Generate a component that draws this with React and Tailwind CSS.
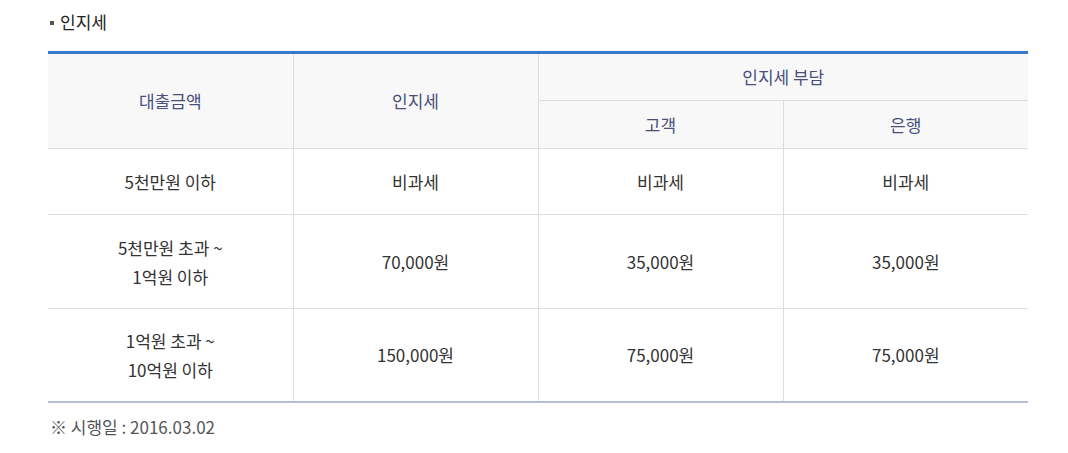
const rows = [
  { amount: ["5천만원 이하"], tax: "비과세", customer: "비과세", bank: "비과세", h: "h-[66px]" },
  { amount: ["5천만원 초과 ~", "1억원 이하"], tax: "70,000원", customer: "35,000원", bank: "35,000원", h: "h-[94px]" },
  { amount: ["1억원 초과 ~", "10억원 이하"], tax: "150,000원", customer: "75,000원", bank: "75,000원", h: "h-[93px]" },
];

const App = () => {
  return (
    <div className="bg-white w-[1068px] h-[453px] px-[48px] pt-[9px] text-[17px] text-[#333] font-['Malgun_Gothic','Noto_Sans_CJK_KR',sans-serif]">
      <h3 className="flex items-center gap-[6px] text-[17px] font-normal text-[#222] leading-[26px] pl-[2px]">
        <span className="w-[4px] h-[4px] bg-[#555] inline-block mt-[2px]"></span>
        인지세
      </h3>

      <table className="mt-[16px] w-[980px] border-collapse table-fixed text-center border-t-[3px] border-t-[#3a78cc] border-b-2 border-b-[#b8bdd6]">
        <colgroup>
          <col className="w-[245px]" />
          <col className="w-[245px]" />
          <col className="w-[245px]" />
          <col className="w-[245px]" />
        </colgroup>
        <thead className="bg-[#f8f8f8] text-[#4a4f7a]">
          <tr className="h-[48px]">
            <th rowSpan={2} className="font-normal border-b border-r border-[#ddd]">대출금액</th>
            <th rowSpan={2} className="font-normal border-b border-r border-[#ddd]">인지세</th>
            <th colSpan={2} className="font-normal border-b border-[#ddd]">인지세 부담</th>
          </tr>
          <tr className="h-[48px]">
            <th className="font-normal border-b border-r border-[#ddd]">고객</th>
            <th className="font-normal border-b border-[#ddd]">은행</th>
          </tr>
        </thead>
        <tbody>
          {rows.map((row, i) => (
            <tr key={i} className={row.h}>
              <td className={"border-r border-[#ddd] leading-[29px] " + (i < rows.length - 1 ? "border-b" : "")}>
                {row.amount.map((line, j) => (
                  <div key={j}>{line}</div>
                ))}
              </td>
              <td className={"border-r border-[#ddd] " + (i < rows.length - 1 ? "border-b" : "")}>{row.tax}</td>
              <td className={"border-r border-[#ddd] " + (i < rows.length - 1 ? "border-b" : "")}>{row.customer}</td>
              <td className={"border-[#ddd] " + (i < rows.length - 1 ? "border-b" : "")}>{row.bank}</td>
            </tr>
          ))}
        </tbody>
      </table>

      <p className="mt-[11px] pl-[2px] text-[#555] leading-[26px]">※ 시행일 : 2016.03.02</p>
    </div>
  );
};

export default App;
